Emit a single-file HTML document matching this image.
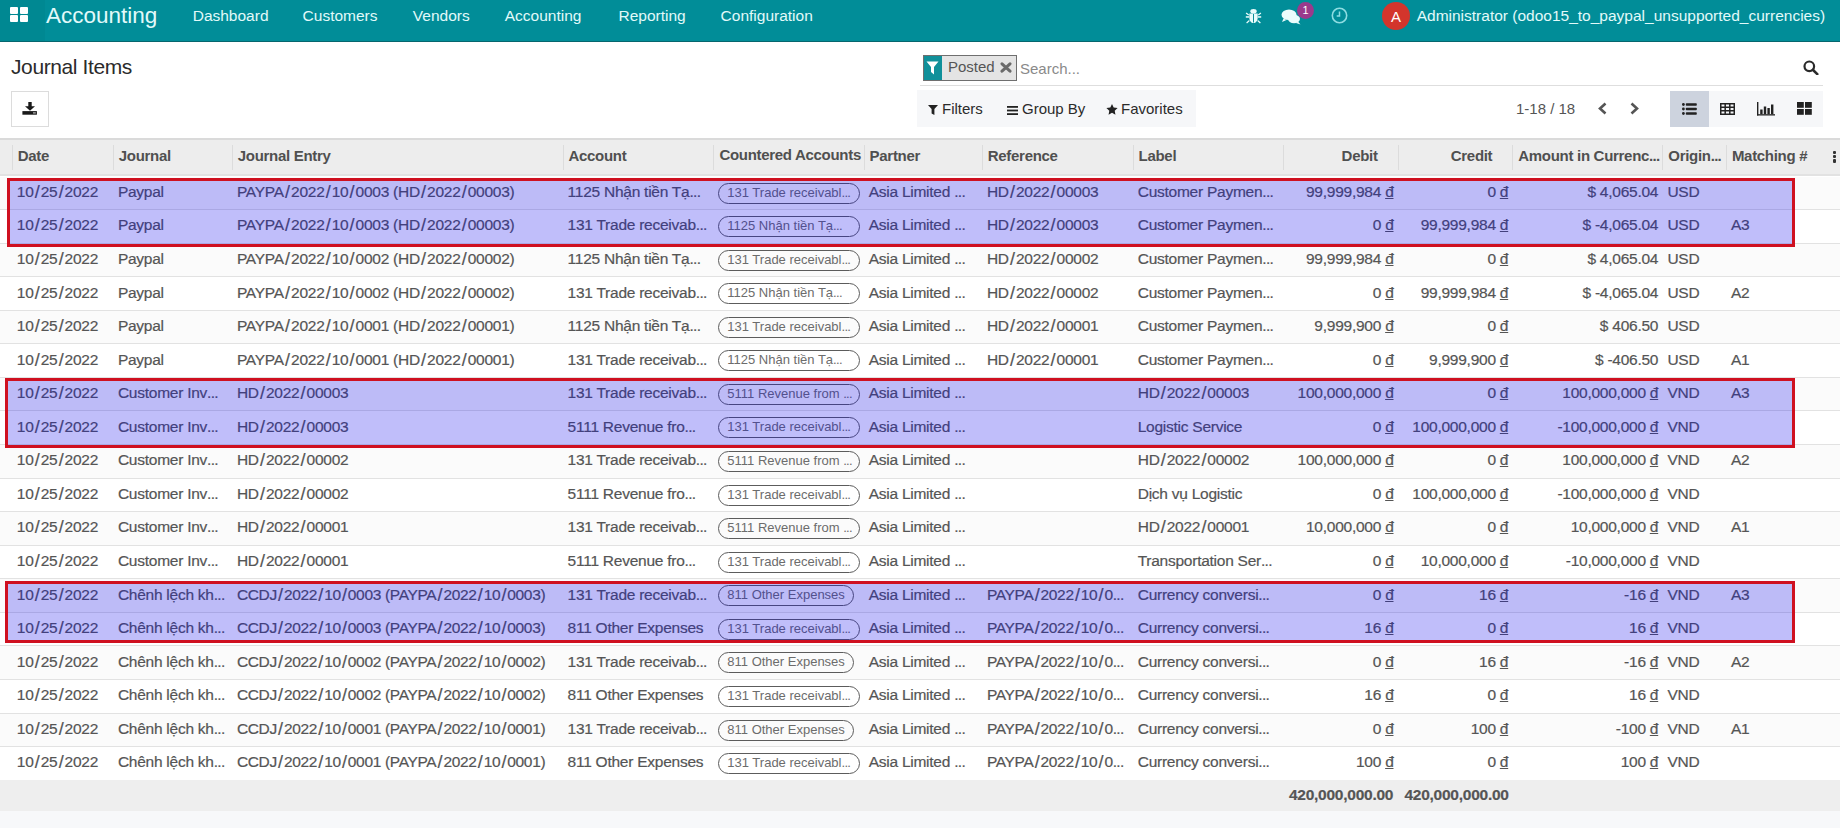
<!DOCTYPE html>
<html><head><meta charset="utf-8">
<style>
*{box-sizing:border-box}
html,body{margin:0;padding:0}
body{width:1840px;height:828px;overflow:hidden;position:relative;background:#fff;font-family:"Liberation Sans",sans-serif;color:#4c4c4c}
.a{position:absolute;white-space:nowrap}
.nav{position:absolute;left:0;top:0;width:1840px;height:42px;background:#018d98;border-bottom:1px solid #06666e}
.nav .t{position:absolute;white-space:nowrap;color:#e2fafa;font-size:15.5px;line-height:17px;top:7px}
.hdr{position:absolute;left:0;top:138px;width:1840px;height:38px;background:#ededed;border-top:2px solid #dadada;border-bottom:2px solid #e2e2e2}
.hdr .sep{position:absolute;top:5px;width:1px;height:25px;background:#dcdcdc}
.hdr .h{position:absolute;top:7px;letter-spacing:-0.3px;font-size:15px;font-weight:bold;line-height:17px;color:#505050;white-space:nowrap}
.row{position:absolute;left:0;width:1840px;border-bottom:1px solid #e2e2e2}
.row.st{background:#fbfbfb}
.c{position:absolute;top:6.3px;font-size:15.5px;letter-spacing:-0.25px;line-height:17px;white-space:nowrap;color:#555;-webkit-text-stroke:0.2px #555}
.c.r{text-align:right}
.sl{padding:0 1.2px;font-size:18px;position:relative;top:1px;line-height:1px}
.el{letter-spacing:-0.7px}
.bdg{position:absolute;top:6px;height:21px;border:1.4px solid #5c5c5c;border-radius:11px;font-size:13px;line-height:18px;padding:0 8px 0 8px;color:#6c6c6c;white-space:nowrap}
u{text-decoration:underline;text-underline-offset:1px}
.ov{position:absolute;border:3px solid #cf1020;background:rgba(10,5,235,0.26)}
.foot{position:absolute;left:0;top:780px;width:1840px;height:31px;background:#eeeeee}
.foot .c{font-weight:bold;top:6px}
</style></head><body>

<div class="nav">
<div class="a" style="left:0;top:0;width:45px;height:41px;background:rgba(0,0,0,0.035)"></div>
<div class="a" style="left:10px;top:7px;width:18px;height:15px"><div class="a" style="left:0;top:0;width:8px;height:7px;background:#fff;border-radius:1px"></div><div class="a" style="left:9.5px;top:0;width:8px;height:7px;background:#fff;border-radius:1px"></div><div class="a" style="left:0;top:8px;width:8px;height:7px;background:#fff;border-radius:1px"></div><div class="a" style="left:9.5px;top:8px;width:8px;height:7px;background:#fff;border-radius:1px"></div></div>
<div class="t" style="left:46px;top:4px;font-size:22.5px;line-height:24px">Accounting</div>
<div class="t" style="left:192.7px">Dashboard</div>
<div class="t" style="left:302.6px">Customers</div>
<div class="t" style="left:412.8px">Vendors</div>
<div class="t" style="left:504.7px">Accounting</div>
<div class="t" style="left:618.5px">Reporting</div>
<div class="t" style="left:720.6px">Configuration</div>
<svg class="a" style="left:1245px;top:8px" width="17" height="16" viewBox="0 0 17 16"><g fill="#eafcfc"><ellipse cx="8.5" cy="3.3" rx="3.2" ry="2.3"/><path d="M4.3 5.5h8.4v4.2c0 3-1.9 5.3-4.2 5.3s-4.2-2.3-4.2-5.3z"/><rect x="0.8" y="8.2" width="3.2" height="1.5"/><rect x="13" y="8.2" width="3.2" height="1.5"/><path d="M1.5 4.5l2.6 2-0.8 1-2.6-2z M15.5 4.5l-2.6 2 0.8 1 2.6-2z M1.2 14.5l2.8-2.4 0.8 1-2.8 2.4z M15.8 14.5l-2.8-2.4-0.8 1 2.8 2.4z"/></g><rect x="8" y="6" width="1" height="8.5" fill="#0b8e98"/></svg>
<svg class="a" style="left:1281px;top:9px" width="20" height="16" viewBox="0 0 20 16"><g fill="#eafcfc"><ellipse cx="8" cy="5.8" rx="7.5" ry="5.3"/><path d="M2.5 9.5l-1.5 3.5 4.5-2z"/><ellipse cx="13" cy="10" rx="6" ry="4.2"/><path d="M17 12.5l2.5 3-4.5-1.5z"/></g><ellipse cx="8" cy="5.8" rx="6.3" ry="4.3" fill="none" stroke="#0b8e98" stroke-width="0.8" opacity="0.0"/></svg>
<div class="a" style="left:1297px;top:2px;width:17px;height:17px;border-radius:50%;background:#9a3a8c;color:#fff;font-size:11px;line-height:17px;text-align:center">1</div>
<svg class="a" style="left:1331px;top:7px" width="17" height="17" viewBox="0 0 17 17"><circle cx="8.5" cy="8.5" r="7.2" fill="none" stroke="#8fdde2" stroke-width="1.6"/><path d="M8.5 4.5v4.5h-2.8" fill="none" stroke="#8fdde2" stroke-width="1.5"/></svg>
<div class="a" style="left:1382px;top:2px;width:28px;height:28px;border-radius:50%;background:#d3352c;color:#fff;font-size:15px;line-height:29px;text-align:center">A</div>
<div class="t" style="left:1416.7px">Administrator (odoo15_to_paypal_unsupported_currencies)</div>
</div>
<div class="a" style="left:11px;top:55px;font-size:21px;letter-spacing:-0.4px;line-height:24px;color:#2b2b2b">Journal Items</div>
<div class="a" style="left:11px;top:91px;width:38px;height:36px;border:1px solid #dcdcdc;background:#fff"></div>
<svg class="a" style="left:22px;top:101px" width="16" height="15" viewBox="0 0 16 15"><rect x="6.3" y="1" width="3.4" height="5" fill="#1a1a1a"/><path d="M3 5.2h10l-5 4.6z" fill="#1a1a1a"/><rect x="0.4" y="10.1" width="14.5" height="3.6" fill="#1a1a1a"/><rect x="11" y="11.3" width="2.8" height="1.2" fill="#bbb"/></svg>
<div class="a" style="left:923px;top:55px;width:94px;height:26px;border:1px solid #6f6f6f;background:#e4e4e4"></div>
<div class="a" style="left:924px;top:56px;width:18px;height:24px;background:#10909a"></div>
<svg class="a" style="left:926px;top:61px" width="13" height="14" viewBox="0 0 13 14"><path d="M0.5 0.5h12l-4.5 5.5v7.5l-3-2.5v-5z" fill="#fff"/></svg>
<div class="a" style="left:948px;top:58px;font-size:15px;line-height:17px;color:#555">Posted</div>
<svg class="a" style="left:1000px;top:62px" width="12" height="11" viewBox="0 0 12 11"><path d="M2 1.8l8 7.4M10 1.8L2 9.2" stroke="#6a6a6a" stroke-width="3" stroke-linecap="round"/></svg>
<div class="a" style="left:1020px;top:60px;font-size:15px;line-height:17px;color:#8a8a8a">Search...</div>
<div class="a" style="left:920px;top:85px;width:903px;height:1px;background:#dedede"></div>
<svg class="a" style="left:1803px;top:60px" width="16" height="15" viewBox="0 0 16 15"><circle cx="6.3" cy="6.3" r="4.8" fill="none" stroke="#2a2a2a" stroke-width="2.2"/><path d="M9.8 9.8l4.5 4.3" stroke="#2a2a2a" stroke-width="2.6" stroke-linecap="round"/></svg>
<div class="a" style="left:917px;top:90px;width:279px;height:37px;background:#f6f7f9"></div>
<svg class="a" style="left:928px;top:105px" width="10" height="10" viewBox="0 0 10 10"><path d="M0 0h10l-3.6 4v6L3.6 8.5V4z" fill="#222"/></svg>
<div class="a" style="left:942px;top:100px;font-size:15px;line-height:17px;color:#2b2b2b">Filters</div>
<svg class="a" style="left:1007px;top:105.5px" width="11" height="9" viewBox="0 0 11 9"><rect x="0" y="0" width="11" height="1.8" fill="#222"/><rect x="0" y="3.6" width="11" height="1.8" fill="#222"/><rect x="0" y="7.2" width="11" height="1.8" fill="#222"/></svg>
<div class="a" style="left:1022px;top:100px;font-size:15px;line-height:17px;color:#2b2b2b">Group By</div>
<svg class="a" style="left:1106px;top:104px" width="12" height="11" viewBox="0 0 24 23"><path d="M12 0l3.5 7.5 8.2 1-6 5.7 1.5 8.2L12 18.4l-7.2 4 1.5-8.2-6-5.7 8.2-1z" fill="#222"/></svg>
<div class="a" style="left:1121px;top:100px;font-size:15px;line-height:17px;color:#2b2b2b">Favorites</div>
<div class="a" style="left:1516px;top:100px;font-size:15px;line-height:17px;color:#555">1-18 / 18</div>
<svg class="a" style="left:1597px;top:102px" width="11" height="13" viewBox="0 0 11 13"><path d="M8.5 1.5L3 6.5l5.5 5" fill="none" stroke="#555" stroke-width="2.6"/></svg>
<svg class="a" style="left:1629px;top:102px" width="11" height="13" viewBox="0 0 11 13"><path d="M2.5 1.5L8 6.5l-5.5 5" fill="none" stroke="#555" stroke-width="2.6"/></svg>
<div class="a" style="left:1670px;top:91px;width:153px;height:36px;background:#f6f7f9"></div>
<div class="a" style="left:1670px;top:91px;width:39px;height:36px;background:#cdd3de"></div>
<svg class="a" style="left:1682px;top:103px" width="15" height="12" viewBox="0 0 15 12"><g fill="#222"><circle cx="1.4" cy="1.5" r="1.4"/><circle cx="1.4" cy="6" r="1.4"/><circle cx="1.4" cy="10.5" r="1.4"/><rect x="3.8" y="0.2" width="11" height="2.6" rx="0.8"/><rect x="3.8" y="4.7" width="11" height="2.6" rx="0.8"/><rect x="3.8" y="9.2" width="11" height="2.6" rx="0.8"/></g></svg>
<svg class="a" style="left:1720px;top:103px" width="15" height="12" viewBox="0 0 15 12"><g fill="none" stroke="#222" stroke-width="1.5"><rect x="0.75" y="0.75" width="13.5" height="10.5"/><path d="M0.75 4.2h13.5M0.75 7.7h13.5M5.2 0.75v10.5M9.8 0.75v10.5"/></g></svg>
<svg class="a" style="left:1757px;top:102px" width="18" height="14" viewBox="0 0 18 14"><g fill="#222"><rect x="0" y="0" width="1.4" height="13.5"/><rect x="0" y="12.2" width="18" height="1.3"/><rect x="3.2" y="7.5" width="2.4" height="4.7"/><rect x="6.8" y="4.5" width="2.4" height="7.7"/><rect x="10.4" y="6" width="2.4" height="6.2"/><rect x="14" y="2.5" width="2.4" height="9.7"/></g></svg>
<svg class="a" style="left:1797px;top:102px" width="15" height="13" viewBox="0 0 15 13"><g fill="#222"><rect x="0" y="0" width="6.8" height="5.8"/><rect x="8" y="0" width="6.8" height="5.8"/><rect x="0" y="7" width="6.8" height="5.8"/><rect x="8" y="7" width="6.8" height="5.8"/></g></svg>
<div class="hdr">
<div class="sep" style="left:11.7px"></div>
<div class="sep" style="left:112.8px"></div>
<div class="sep" style="left:231.8px"></div>
<div class="sep" style="left:562.5px"></div>
<div class="sep" style="left:713.4px"></div>
<div class="sep" style="left:863.6px"></div>
<div class="sep" style="left:981.8px"></div>
<div class="sep" style="left:1132.6px"></div>
<div class="sep" style="left:1282.6px"></div>
<div class="sep" style="left:1397.6px"></div>
<div class="sep" style="left:1512.3px"></div>
<div class="sep" style="left:1662.3px"></div>
<div class="sep" style="left:1725.9px"></div>
<div class="h" style="left:17.7px">Date</div>
<div class="h" style="left:118.8px">Journal</div>
<div class="h" style="left:237.8px">Journal Entry</div>
<div class="h" style="left:568.5px">Account</div>
<div class="h" style="left:719.4px;margin-top:-1px">Countered Accounts</div>
<div class="h" style="left:869.6px">Partner</div>
<div class="h" style="left:987.8px">Reference</div>
<div class="h" style="left:1138.6px">Label</div>
<div class="h" style="right:462.4px">Debit</div>
<div class="h" style="right:347.7px">Credit</div>
<div class="h" style="left:1518.3px">Amount in Currenc<span class="el">...</span></div>
<div class="h" style="left:1668.3px">Origin<span class="el">...</span></div>
<div class="h" style="left:1731.9px">Matching #</div>
<div class="a" style="left:1833px;top:11px;width:3.2px;height:3.2px;background:#333;border-radius:1px"></div>
<div class="a" style="left:1833px;top:15.2px;width:3.2px;height:3.2px;background:#333;border-radius:1px"></div>
<div class="a" style="left:1833px;top:19.4px;width:3.2px;height:3.2px;background:#333;border-radius:1px"></div>
</div>
<div class="row st" style="top:176.50px;height:33.57px">
<div class="c" style="left:16.8px">10<span class="sl">/</span>25<span class="sl">/</span>2022</div>
<div class="c" style="left:117.9px">Paypal</div>
<div class="c" style="left:236.9px">PAYPA<span class="sl">/</span>2022<span class="sl">/</span>10<span class="sl">/</span>0003 (HD<span class="sl">/</span>2022<span class="sl">/</span>00003)</div>
<div class="c" style="left:567.6px">1125 Nhận tiền Tạ<span class="el">...</span></div>
<div class="bdg" style="left:718.3px;width:142px">131 Trade receivabl<span class="el">...</span></div>
<div class="c" style="left:868.7px">Asia Limited <span class="el">...</span></div>
<div class="c" style="left:986.9px">HD<span class="sl">/</span>2022<span class="sl">/</span>00003</div>
<div class="c" style="left:1137.7px">Customer Paymen<span class="el">...</span></div>
<div class="c r" style="right:446.5px">99,999,984 <u>đ</u></div>
<div class="c r" style="right:331.8px">0 <u>đ</u></div>
<div class="c r" style="right:181.8px">$ 4,065.04</div>
<div class="c" style="left:1667.4px">USD</div>
</div>
<div class="row" style="top:210.07px;height:33.57px">
<div class="c" style="left:16.8px">10<span class="sl">/</span>25<span class="sl">/</span>2022</div>
<div class="c" style="left:117.9px">Paypal</div>
<div class="c" style="left:236.9px">PAYPA<span class="sl">/</span>2022<span class="sl">/</span>10<span class="sl">/</span>0003 (HD<span class="sl">/</span>2022<span class="sl">/</span>00003)</div>
<div class="c" style="left:567.6px">131 Trade receivab<span class="el">...</span></div>
<div class="bdg" style="left:718.3px;width:142px">1125 Nhận tiền Tạ<span class="el">...</span></div>
<div class="c" style="left:868.7px">Asia Limited <span class="el">...</span></div>
<div class="c" style="left:986.9px">HD<span class="sl">/</span>2022<span class="sl">/</span>00003</div>
<div class="c" style="left:1137.7px">Customer Paymen<span class="el">...</span></div>
<div class="c r" style="right:446.5px">0 <u>đ</u></div>
<div class="c r" style="right:331.8px">99,999,984 <u>đ</u></div>
<div class="c r" style="right:181.8px">$ -4,065.04</div>
<div class="c" style="left:1667.4px">USD</div>
<div class="c" style="left:1731.0px">A3</div>
</div>
<div class="row st" style="top:243.64px;height:33.57px">
<div class="c" style="left:16.8px">10<span class="sl">/</span>25<span class="sl">/</span>2022</div>
<div class="c" style="left:117.9px">Paypal</div>
<div class="c" style="left:236.9px">PAYPA<span class="sl">/</span>2022<span class="sl">/</span>10<span class="sl">/</span>0002 (HD<span class="sl">/</span>2022<span class="sl">/</span>00002)</div>
<div class="c" style="left:567.6px">1125 Nhận tiền Tạ<span class="el">...</span></div>
<div class="bdg" style="left:718.3px;width:142px">131 Trade receivabl<span class="el">...</span></div>
<div class="c" style="left:868.7px">Asia Limited <span class="el">...</span></div>
<div class="c" style="left:986.9px">HD<span class="sl">/</span>2022<span class="sl">/</span>00002</div>
<div class="c" style="left:1137.7px">Customer Paymen<span class="el">...</span></div>
<div class="c r" style="right:446.5px">99,999,984 <u>đ</u></div>
<div class="c r" style="right:331.8px">0 <u>đ</u></div>
<div class="c r" style="right:181.8px">$ 4,065.04</div>
<div class="c" style="left:1667.4px">USD</div>
</div>
<div class="row" style="top:277.21px;height:33.57px">
<div class="c" style="left:16.8px">10<span class="sl">/</span>25<span class="sl">/</span>2022</div>
<div class="c" style="left:117.9px">Paypal</div>
<div class="c" style="left:236.9px">PAYPA<span class="sl">/</span>2022<span class="sl">/</span>10<span class="sl">/</span>0002 (HD<span class="sl">/</span>2022<span class="sl">/</span>00002)</div>
<div class="c" style="left:567.6px">131 Trade receivab<span class="el">...</span></div>
<div class="bdg" style="left:718.3px;width:142px">1125 Nhận tiền Tạ<span class="el">...</span></div>
<div class="c" style="left:868.7px">Asia Limited <span class="el">...</span></div>
<div class="c" style="left:986.9px">HD<span class="sl">/</span>2022<span class="sl">/</span>00002</div>
<div class="c" style="left:1137.7px">Customer Paymen<span class="el">...</span></div>
<div class="c r" style="right:446.5px">0 <u>đ</u></div>
<div class="c r" style="right:331.8px">99,999,984 <u>đ</u></div>
<div class="c r" style="right:181.8px">$ -4,065.04</div>
<div class="c" style="left:1667.4px">USD</div>
<div class="c" style="left:1731.0px">A2</div>
</div>
<div class="row st" style="top:310.78px;height:33.57px">
<div class="c" style="left:16.8px">10<span class="sl">/</span>25<span class="sl">/</span>2022</div>
<div class="c" style="left:117.9px">Paypal</div>
<div class="c" style="left:236.9px">PAYPA<span class="sl">/</span>2022<span class="sl">/</span>10<span class="sl">/</span>0001 (HD<span class="sl">/</span>2022<span class="sl">/</span>00001)</div>
<div class="c" style="left:567.6px">1125 Nhận tiền Tạ<span class="el">...</span></div>
<div class="bdg" style="left:718.3px;width:142px">131 Trade receivabl<span class="el">...</span></div>
<div class="c" style="left:868.7px">Asia Limited <span class="el">...</span></div>
<div class="c" style="left:986.9px">HD<span class="sl">/</span>2022<span class="sl">/</span>00001</div>
<div class="c" style="left:1137.7px">Customer Paymen<span class="el">...</span></div>
<div class="c r" style="right:446.5px">9,999,900 <u>đ</u></div>
<div class="c r" style="right:331.8px">0 <u>đ</u></div>
<div class="c r" style="right:181.8px">$ 406.50</div>
<div class="c" style="left:1667.4px">USD</div>
</div>
<div class="row" style="top:344.35px;height:33.57px">
<div class="c" style="left:16.8px">10<span class="sl">/</span>25<span class="sl">/</span>2022</div>
<div class="c" style="left:117.9px">Paypal</div>
<div class="c" style="left:236.9px">PAYPA<span class="sl">/</span>2022<span class="sl">/</span>10<span class="sl">/</span>0001 (HD<span class="sl">/</span>2022<span class="sl">/</span>00001)</div>
<div class="c" style="left:567.6px">131 Trade receivab<span class="el">...</span></div>
<div class="bdg" style="left:718.3px;width:142px">1125 Nhận tiền Tạ<span class="el">...</span></div>
<div class="c" style="left:868.7px">Asia Limited <span class="el">...</span></div>
<div class="c" style="left:986.9px">HD<span class="sl">/</span>2022<span class="sl">/</span>00001</div>
<div class="c" style="left:1137.7px">Customer Paymen<span class="el">...</span></div>
<div class="c r" style="right:446.5px">0 <u>đ</u></div>
<div class="c r" style="right:331.8px">9,999,900 <u>đ</u></div>
<div class="c r" style="right:181.8px">$ -406.50</div>
<div class="c" style="left:1667.4px">USD</div>
<div class="c" style="left:1731.0px">A1</div>
</div>
<div class="row st" style="top:377.92px;height:33.57px">
<div class="c" style="left:16.8px">10<span class="sl">/</span>25<span class="sl">/</span>2022</div>
<div class="c" style="left:117.9px">Customer Inv<span class="el">...</span></div>
<div class="c" style="left:236.9px">HD<span class="sl">/</span>2022<span class="sl">/</span>00003</div>
<div class="c" style="left:567.6px">131 Trade receivab<span class="el">...</span></div>
<div class="bdg" style="left:718.3px;width:142px">5111 Revenue from <span class="el">...</span></div>
<div class="c" style="left:868.7px">Asia Limited <span class="el">...</span></div>
<div class="c" style="left:1137.7px">HD<span class="sl">/</span>2022<span class="sl">/</span>00003</div>
<div class="c r" style="right:446.5px">100,000,000 <u>đ</u></div>
<div class="c r" style="right:331.8px">0 <u>đ</u></div>
<div class="c r" style="right:181.8px">100,000,000 <u>đ</u></div>
<div class="c" style="left:1667.4px">VND</div>
<div class="c" style="left:1731.0px">A3</div>
</div>
<div class="row" style="top:411.49px;height:33.57px">
<div class="c" style="left:16.8px">10<span class="sl">/</span>25<span class="sl">/</span>2022</div>
<div class="c" style="left:117.9px">Customer Inv<span class="el">...</span></div>
<div class="c" style="left:236.9px">HD<span class="sl">/</span>2022<span class="sl">/</span>00003</div>
<div class="c" style="left:567.6px">5111 Revenue fro<span class="el">...</span></div>
<div class="bdg" style="left:718.3px;width:142px">131 Trade receivabl<span class="el">...</span></div>
<div class="c" style="left:868.7px">Asia Limited <span class="el">...</span></div>
<div class="c" style="left:1137.7px">Logistic Service</div>
<div class="c r" style="right:446.5px">0 <u>đ</u></div>
<div class="c r" style="right:331.8px">100,000,000 <u>đ</u></div>
<div class="c r" style="right:181.8px">-100,000,000 <u>đ</u></div>
<div class="c" style="left:1667.4px">VND</div>
</div>
<div class="row st" style="top:445.06px;height:33.57px">
<div class="c" style="left:16.8px">10<span class="sl">/</span>25<span class="sl">/</span>2022</div>
<div class="c" style="left:117.9px">Customer Inv<span class="el">...</span></div>
<div class="c" style="left:236.9px">HD<span class="sl">/</span>2022<span class="sl">/</span>00002</div>
<div class="c" style="left:567.6px">131 Trade receivab<span class="el">...</span></div>
<div class="bdg" style="left:718.3px;width:142px">5111 Revenue from <span class="el">...</span></div>
<div class="c" style="left:868.7px">Asia Limited <span class="el">...</span></div>
<div class="c" style="left:1137.7px">HD<span class="sl">/</span>2022<span class="sl">/</span>00002</div>
<div class="c r" style="right:446.5px">100,000,000 <u>đ</u></div>
<div class="c r" style="right:331.8px">0 <u>đ</u></div>
<div class="c r" style="right:181.8px">100,000,000 <u>đ</u></div>
<div class="c" style="left:1667.4px">VND</div>
<div class="c" style="left:1731.0px">A2</div>
</div>
<div class="row" style="top:478.63px;height:33.57px">
<div class="c" style="left:16.8px">10<span class="sl">/</span>25<span class="sl">/</span>2022</div>
<div class="c" style="left:117.9px">Customer Inv<span class="el">...</span></div>
<div class="c" style="left:236.9px">HD<span class="sl">/</span>2022<span class="sl">/</span>00002</div>
<div class="c" style="left:567.6px">5111 Revenue fro<span class="el">...</span></div>
<div class="bdg" style="left:718.3px;width:142px">131 Trade receivabl<span class="el">...</span></div>
<div class="c" style="left:868.7px">Asia Limited <span class="el">...</span></div>
<div class="c" style="left:1137.7px">Dịch vụ Logistic</div>
<div class="c r" style="right:446.5px">0 <u>đ</u></div>
<div class="c r" style="right:331.8px">100,000,000 <u>đ</u></div>
<div class="c r" style="right:181.8px">-100,000,000 <u>đ</u></div>
<div class="c" style="left:1667.4px">VND</div>
</div>
<div class="row st" style="top:512.20px;height:33.57px">
<div class="c" style="left:16.8px">10<span class="sl">/</span>25<span class="sl">/</span>2022</div>
<div class="c" style="left:117.9px">Customer Inv<span class="el">...</span></div>
<div class="c" style="left:236.9px">HD<span class="sl">/</span>2022<span class="sl">/</span>00001</div>
<div class="c" style="left:567.6px">131 Trade receivab<span class="el">...</span></div>
<div class="bdg" style="left:718.3px;width:142px">5111 Revenue from <span class="el">...</span></div>
<div class="c" style="left:868.7px">Asia Limited <span class="el">...</span></div>
<div class="c" style="left:1137.7px">HD<span class="sl">/</span>2022<span class="sl">/</span>00001</div>
<div class="c r" style="right:446.5px">10,000,000 <u>đ</u></div>
<div class="c r" style="right:331.8px">0 <u>đ</u></div>
<div class="c r" style="right:181.8px">10,000,000 <u>đ</u></div>
<div class="c" style="left:1667.4px">VND</div>
<div class="c" style="left:1731.0px">A1</div>
</div>
<div class="row" style="top:545.77px;height:33.57px">
<div class="c" style="left:16.8px">10<span class="sl">/</span>25<span class="sl">/</span>2022</div>
<div class="c" style="left:117.9px">Customer Inv<span class="el">...</span></div>
<div class="c" style="left:236.9px">HD<span class="sl">/</span>2022<span class="sl">/</span>00001</div>
<div class="c" style="left:567.6px">5111 Revenue fro<span class="el">...</span></div>
<div class="bdg" style="left:718.3px;width:142px">131 Trade receivabl<span class="el">...</span></div>
<div class="c" style="left:868.7px">Asia Limited <span class="el">...</span></div>
<div class="c" style="left:1137.7px">Transportation Ser<span class="el">...</span></div>
<div class="c r" style="right:446.5px">0 <u>đ</u></div>
<div class="c r" style="right:331.8px">10,000,000 <u>đ</u></div>
<div class="c r" style="right:181.8px">-10,000,000 <u>đ</u></div>
<div class="c" style="left:1667.4px">VND</div>
</div>
<div class="row st" style="top:579.34px;height:33.57px">
<div class="c" style="left:16.8px">10<span class="sl">/</span>25<span class="sl">/</span>2022</div>
<div class="c" style="left:117.9px">Chênh lệch kh<span class="el">...</span></div>
<div class="c" style="left:236.9px;letter-spacing:-0.33px">CCDJ<span class="sl">/</span>2022<span class="sl">/</span>10<span class="sl">/</span>0003 (PAYPA<span class="sl">/</span>2022<span class="sl">/</span>10<span class="sl">/</span>0003)</div>
<div class="c" style="left:567.6px">131 Trade receivab<span class="el">...</span></div>
<div class="bdg" style="left:718.3px">811 Other Expenses</div>
<div class="c" style="left:868.7px">Asia Limited <span class="el">...</span></div>
<div class="c" style="left:986.9px;letter-spacing:-0.33px">PAYPA<span class="sl">/</span>2022<span class="sl">/</span>10<span class="sl">/</span>0<span class="el">...</span></div>
<div class="c" style="left:1137.7px">Currency conversi<span class="el">...</span></div>
<div class="c r" style="right:446.5px">0 <u>đ</u></div>
<div class="c r" style="right:331.8px">16 <u>đ</u></div>
<div class="c r" style="right:181.8px">-16 <u>đ</u></div>
<div class="c" style="left:1667.4px">VND</div>
<div class="c" style="left:1731.0px">A3</div>
</div>
<div class="row" style="top:612.91px;height:33.57px">
<div class="c" style="left:16.8px">10<span class="sl">/</span>25<span class="sl">/</span>2022</div>
<div class="c" style="left:117.9px">Chênh lệch kh<span class="el">...</span></div>
<div class="c" style="left:236.9px;letter-spacing:-0.33px">CCDJ<span class="sl">/</span>2022<span class="sl">/</span>10<span class="sl">/</span>0003 (PAYPA<span class="sl">/</span>2022<span class="sl">/</span>10<span class="sl">/</span>0003)</div>
<div class="c" style="left:567.6px">811 Other Expenses</div>
<div class="bdg" style="left:718.3px;width:142px">131 Trade receivabl<span class="el">...</span></div>
<div class="c" style="left:868.7px">Asia Limited <span class="el">...</span></div>
<div class="c" style="left:986.9px;letter-spacing:-0.33px">PAYPA<span class="sl">/</span>2022<span class="sl">/</span>10<span class="sl">/</span>0<span class="el">...</span></div>
<div class="c" style="left:1137.7px">Currency conversi<span class="el">...</span></div>
<div class="c r" style="right:446.5px">16 <u>đ</u></div>
<div class="c r" style="right:331.8px">0 <u>đ</u></div>
<div class="c r" style="right:181.8px">16 <u>đ</u></div>
<div class="c" style="left:1667.4px">VND</div>
</div>
<div class="row st" style="top:646.48px;height:33.57px">
<div class="c" style="left:16.8px">10<span class="sl">/</span>25<span class="sl">/</span>2022</div>
<div class="c" style="left:117.9px">Chênh lệch kh<span class="el">...</span></div>
<div class="c" style="left:236.9px;letter-spacing:-0.33px">CCDJ<span class="sl">/</span>2022<span class="sl">/</span>10<span class="sl">/</span>0002 (PAYPA<span class="sl">/</span>2022<span class="sl">/</span>10<span class="sl">/</span>0002)</div>
<div class="c" style="left:567.6px">131 Trade receivab<span class="el">...</span></div>
<div class="bdg" style="left:718.3px">811 Other Expenses</div>
<div class="c" style="left:868.7px">Asia Limited <span class="el">...</span></div>
<div class="c" style="left:986.9px;letter-spacing:-0.33px">PAYPA<span class="sl">/</span>2022<span class="sl">/</span>10<span class="sl">/</span>0<span class="el">...</span></div>
<div class="c" style="left:1137.7px">Currency conversi<span class="el">...</span></div>
<div class="c r" style="right:446.5px">0 <u>đ</u></div>
<div class="c r" style="right:331.8px">16 <u>đ</u></div>
<div class="c r" style="right:181.8px">-16 <u>đ</u></div>
<div class="c" style="left:1667.4px">VND</div>
<div class="c" style="left:1731.0px">A2</div>
</div>
<div class="row" style="top:680.05px;height:33.57px">
<div class="c" style="left:16.8px">10<span class="sl">/</span>25<span class="sl">/</span>2022</div>
<div class="c" style="left:117.9px">Chênh lệch kh<span class="el">...</span></div>
<div class="c" style="left:236.9px;letter-spacing:-0.33px">CCDJ<span class="sl">/</span>2022<span class="sl">/</span>10<span class="sl">/</span>0002 (PAYPA<span class="sl">/</span>2022<span class="sl">/</span>10<span class="sl">/</span>0002)</div>
<div class="c" style="left:567.6px">811 Other Expenses</div>
<div class="bdg" style="left:718.3px;width:142px">131 Trade receivabl<span class="el">...</span></div>
<div class="c" style="left:868.7px">Asia Limited <span class="el">...</span></div>
<div class="c" style="left:986.9px;letter-spacing:-0.33px">PAYPA<span class="sl">/</span>2022<span class="sl">/</span>10<span class="sl">/</span>0<span class="el">...</span></div>
<div class="c" style="left:1137.7px">Currency conversi<span class="el">...</span></div>
<div class="c r" style="right:446.5px">16 <u>đ</u></div>
<div class="c r" style="right:331.8px">0 <u>đ</u></div>
<div class="c r" style="right:181.8px">16 <u>đ</u></div>
<div class="c" style="left:1667.4px">VND</div>
</div>
<div class="row st" style="top:713.62px;height:33.57px">
<div class="c" style="left:16.8px">10<span class="sl">/</span>25<span class="sl">/</span>2022</div>
<div class="c" style="left:117.9px">Chênh lệch kh<span class="el">...</span></div>
<div class="c" style="left:236.9px;letter-spacing:-0.33px">CCDJ<span class="sl">/</span>2022<span class="sl">/</span>10<span class="sl">/</span>0001 (PAYPA<span class="sl">/</span>2022<span class="sl">/</span>10<span class="sl">/</span>0001)</div>
<div class="c" style="left:567.6px">131 Trade receivab<span class="el">...</span></div>
<div class="bdg" style="left:718.3px">811 Other Expenses</div>
<div class="c" style="left:868.7px">Asia Limited <span class="el">...</span></div>
<div class="c" style="left:986.9px;letter-spacing:-0.33px">PAYPA<span class="sl">/</span>2022<span class="sl">/</span>10<span class="sl">/</span>0<span class="el">...</span></div>
<div class="c" style="left:1137.7px">Currency conversi<span class="el">...</span></div>
<div class="c r" style="right:446.5px">0 <u>đ</u></div>
<div class="c r" style="right:331.8px">100 <u>đ</u></div>
<div class="c r" style="right:181.8px">-100 <u>đ</u></div>
<div class="c" style="left:1667.4px">VND</div>
<div class="c" style="left:1731.0px">A1</div>
</div>
<div class="row" style="top:747.19px;height:33.57px">
<div class="c" style="left:16.8px">10<span class="sl">/</span>25<span class="sl">/</span>2022</div>
<div class="c" style="left:117.9px">Chênh lệch kh<span class="el">...</span></div>
<div class="c" style="left:236.9px;letter-spacing:-0.33px">CCDJ<span class="sl">/</span>2022<span class="sl">/</span>10<span class="sl">/</span>0001 (PAYPA<span class="sl">/</span>2022<span class="sl">/</span>10<span class="sl">/</span>0001)</div>
<div class="c" style="left:567.6px">811 Other Expenses</div>
<div class="bdg" style="left:718.3px;width:142px">131 Trade receivabl<span class="el">...</span></div>
<div class="c" style="left:868.7px">Asia Limited <span class="el">...</span></div>
<div class="c" style="left:986.9px;letter-spacing:-0.33px">PAYPA<span class="sl">/</span>2022<span class="sl">/</span>10<span class="sl">/</span>0<span class="el">...</span></div>
<div class="c" style="left:1137.7px">Currency conversi<span class="el">...</span></div>
<div class="c r" style="right:446.5px">100 <u>đ</u></div>
<div class="c r" style="right:331.8px">0 <u>đ</u></div>
<div class="c r" style="right:181.8px">100 <u>đ</u></div>
<div class="c" style="left:1667.4px">VND</div>
</div>
<div class="foot">
<div class="c r" style="right:446.8px">420,000,000.00</div>
<div class="c r" style="right:331.3px">420,000,000.00</div>
</div>
<div class="a" style="left:0;top:811px;width:1840px;height:17px;background:#f7f8fa"></div>
<div class="ov" style="left:7.0px;top:178.0px;width:1787.5px;height:69.0px"></div>
<div class="ov" style="left:5.0px;top:377.8px;width:1790.0px;height:70.0px"></div>
<div class="ov" style="left:5.0px;top:581.0px;width:1790.0px;height:61.5px"></div>
</body></html>
